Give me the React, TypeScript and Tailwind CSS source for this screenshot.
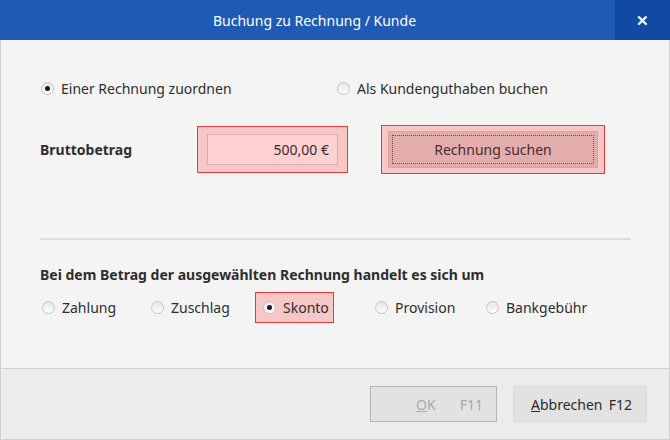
import React from 'react'

const FONT = { fontFamily: '"Noto Sans", "Open Sans", sans-serif' }

function Radio({ checked }: { checked?: boolean }) {
  return (
    <span className="relative flex h-[13px] w-[13px] shrink-0 items-center justify-center rounded-full border border-[#c4c4c4] bg-gradient-to-b from-[#e6e6e6] to-white">
      {checked && <span className="h-[5px] w-[5px] rounded-full bg-[#1a1a1a]" />}
    </span>
  )
}

function Option({ label, checked }: { label: string; checked?: boolean }) {
  return (
    <label className="flex items-center gap-[7px] text-[14px] text-[#2e2e2e]">
      <Radio checked={checked} />
      {label}
    </label>
  )
}

export default function App() {
  return (
    <div style={FONT} className="flex h-[440px] w-[670px] flex-col overflow-hidden bg-[#f4f4f4]">
      <div className="flex h-[40px] shrink-0 items-center bg-[#1f5bb5] text-white">
        <div className="flex-1 pl-[14px] text-center text-[14px]">Buchung zu Rechnung / Kunde</div>
        <div className="flex h-full w-[55px] items-center justify-center bg-[#1249a5] text-[15px] font-bold">✕</div>
      </div>

      <div className="flex flex-1 flex-col border-x border-[#d0d0d0] bg-[#f4f4f4] px-[39px]">
        <div className="mt-[38px] flex items-center">
          <div className="w-[297px] pl-[1px]">
            <Option label="Einer Rechnung zuordnen" checked />
          </div>
          <Option label="Als Kundenguthaben buchen" />
        </div>

        <div className="mt-[26px] flex items-center">
          <div className="w-[157px] text-[14px] font-bold text-[#2e2e2e]">Bruttobetrag</div>
          <div className="h-[47px] w-[151px] border border-[#e83a3a] bg-[#f7c7c7] px-[9px] py-[7px]">
            <div className="flex h-full items-center justify-end border border-[#e2a9a9] bg-[#ffd1d1] pr-[8px] text-[14px] text-[#3a2a2a]">
              500,00 €
            </div>
          </div>
          <div className="ml-[33px] h-[49px] w-[224px] border border-[#e83a3a] bg-[#f7c7c7] px-[6px] py-[5px]">
            <div className="h-full border border-[#dba2a2] bg-[#e3adad] p-[3px]">
              <div className="flex h-full items-center justify-center border border-dotted border-[#6a4a4a] text-[14px] text-[#4a2c2c]">
                Rechnung suchen
              </div>
            </div>
          </div>
        </div>

        <div className="mt-[64px] h-[2px] w-[591px] bg-[#dcdcdc]" />

        <div className="mt-[24px] text-[14px] font-bold text-[#2e2e2e]">
          Bei dem Betrag der ausgewählten Rechnung handelt es sich um
        </div>

        <div className="mt-[7px] flex items-center">
          <div className="w-[111px] pl-[2px]">
            <Option label="Zahlung" />
          </div>
          <div className="w-[104px]">
            <Option label="Zuschlag" />
          </div>
          <div className="flex h-[31px] w-[79px] items-center border border-[#e83a3a] bg-[#f7c7c7] pl-[7px]">
            <Option label="Skonto" checked />
          </div>
          <div className="ml-[41px] w-[111px]">
            <Option label="Provision" />
          </div>
          <Option label="Bankgebühr" />
        </div>
      </div>

      <div className="flex h-[72px] shrink-0 items-center justify-end gap-[16px] border-x border-b border-t border-[#d0d0d0] bg-[#ececec] pr-[22px]">
        <div className="flex h-[36px] w-[127px] items-center justify-end gap-[24px] border border-[#b4b4b4] bg-[#e2e2e2] pr-[13px] text-[14px] text-[#a8a8a8]">
          <span>
            <span className="underline">O</span>K
          </span>
          <span>F11</span>
        </div>
        <div className="flex h-[36px] w-[134px] items-center justify-between border border-[#dadada] bg-[#e2e2e2] pl-[17px] pr-[14px] text-[14px] text-[#2a2a2a]">
          <span>
            <span className="underline">A</span>bbrechen
          </span>
          <span>F12</span>
        </div>
      </div>
    </div>
  )
}
